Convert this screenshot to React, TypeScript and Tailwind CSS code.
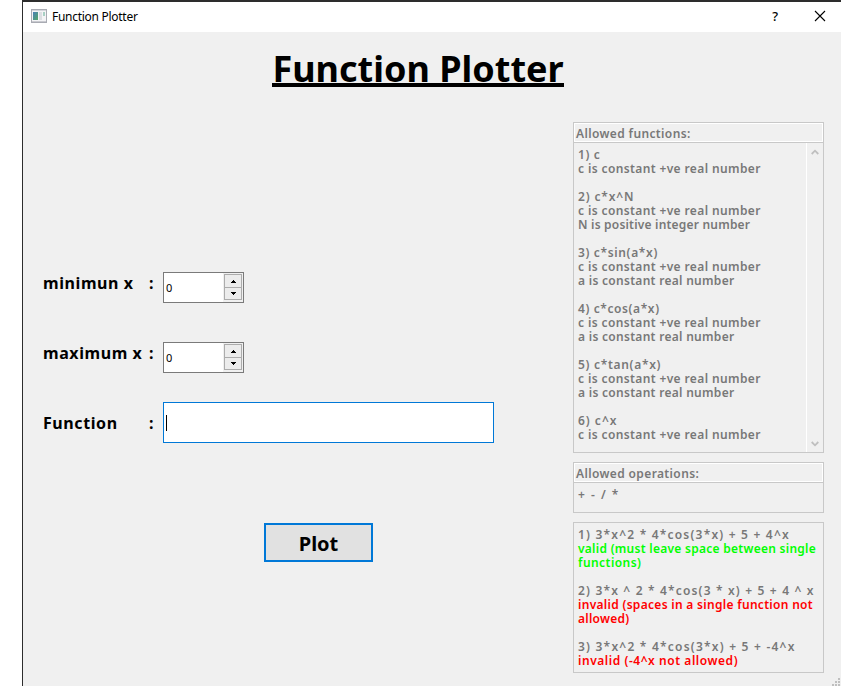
import type { ReactNode } from 'react';

type LineData = { text: string; tone?: string; track?: string };

const muted = 'text-[#787878]';
const green = 'text-[#00ff00]';
const red = 'text-[#ff0000]';

const functionLines: LineData[] = [
  { text: '1) c', track: 'tracking-[0.6px]' },
  { text: 'c is constant +ve real number' },
  { text: '' },
  { text: '2) c*x^N', track: 'tracking-[0.85px]' },
  { text: 'c is constant +ve real number' },
  { text: 'N is positive integer number', track: 'tracking-[0.2px]' },
  { text: '' },
  { text: '3) c*sin(a*x)', track: 'tracking-[0.65px]' },
  { text: 'c is constant +ve real number' },
  { text: 'a is constant real number', track: 'tracking-[0.29px]' },
  { text: '' },
  { text: '4) c*cos(a*x)', track: 'tracking-[0.6px]' },
  { text: 'c is constant +ve real number' },
  { text: 'a is constant real number', track: 'tracking-[0.29px]' },
  { text: '' },
  { text: '5) c*tan(a*x)', track: 'tracking-[0.7px]' },
  { text: 'c is constant +ve real number' },
  { text: 'a is constant real number', track: 'tracking-[0.29px]' },
  { text: '' },
  { text: '6) c^x', track: 'tracking-[1px]' },
  { text: 'c is constant +ve real number' },
];

const exampleLines: LineData[] = [
  { text: '1) 3*x^2 * 4*cos(3*x) + 5 + 4^x', track: 'tracking-[1.2px]' },
  { text: 'valid (must leave space between single', tone: green, track: 'tracking-[0.27px]' },
  { text: 'functions)', tone: green, track: 'tracking-[0.45px]' },
  { text: '' },
  { text: '2) 3*x ^ 2 * 4*cos(3 * x) + 5 + 4 ^ x', track: 'tracking-[1.17px]' },
  { text: 'invalid (spaces in a single function not', tone: red, track: 'tracking-[0.3px]' },
  { text: 'allowed)', tone: red, track: 'tracking-[0.27px]' },
  { text: '' },
  { text: '3) 3*x^2 * 4*cos(3*x) + 5 + -4^x', track: 'tracking-[1.22px]' },
  { text: 'invalid (-4^x not allowed)', tone: red, track: 'tracking-[0.55px]' },
];

function Lines({ lines }: { lines: LineData[] }) {
  return (
    <div className="pl-1 pt-[5px] text-[12px] leading-[14px] font-semibold">
      {lines.map((line, i) => (
        <div key={i} className={`h-[14px] whitespace-pre ${line.tone ?? muted} ${line.track ?? 'tracking-[0.38px]'}`}>
          {line.text}
        </div>
      ))}
    </div>
  );
}

function PanelTitle({ children }: { children: ReactNode }) {
  return (
    <div className="h-5 shrink-0 border-b border-[#c8c8c8]">
      <div className={`h-[19px] border border-white pl-px text-[12px] leading-[19px] font-semibold tracking-[0.37px] whitespace-pre ${muted}`}>
        {children}
      </div>
    </div>
  );
}

function Arrow({ up }: { up?: boolean }) {
  return (
    <svg width="6" height="3" viewBox="0.5 0 6 3" shapeRendering="crispEdges">
      <path d={up ? 'M3 0h1v1h1v1h1v1H1V2h1V1h1z' : 'M1 0h5v1H5v1H4v1H3V2H2V1H1z'} fill="#000" />
    </svg>
  );
}

function SpinBox() {
  return (
    <div className="flex h-[31px] w-[81px] justify-between border border-[#7a7a7a] bg-white">
      <span className="pl-[2px] text-[11px] leading-[30px]">0</span>
      <div className="flex w-[20px] flex-col bg-[#f0f0f0] py-px pr-px pl-px">
        <div className="flex h-[14px] items-center justify-center border border-[#acacac] bg-[#ececec]">
          <Arrow up />
        </div>
        <div className="flex h-[12px] items-center justify-center border border-t-0 border-[#acacac] bg-[#ececec]">
          <Arrow />
        </div>
      </div>
    </div>
  );
}

function FieldLabel({ children }: { children: string }) {
  return (
    <div className="flex w-[120px] shrink-0 justify-between pr-[9px] text-[16px] leading-[22px] font-bold tracking-[0.58px] whitespace-pre">
      <span>{children}</span>
      <span>:</span>
    </div>
  );
}

function ScrollChevron({ up }: { up?: boolean }) {
  return (
    <svg width="8" height="6" viewBox="0 0 8 6" fill="none" stroke="#bfbfbf" strokeWidth="1.8">
      <path d={up ? 'M.7 5 4 1.7 7.3 5' : 'M.7 1 4 4.3 7.3 1'} />
    </svg>
  );
}

export default function App() {
  return (
    <div className="h-[686px] w-[862px] overflow-hidden bg-white pl-[22px] font-['Noto_Sans',sans-serif] text-black">
      <div className="relative flex h-full w-[819px] flex-col border-t-2 border-l border-t-[#2d2d2d] border-l-[#2d2d2d] bg-[#f0f0f0]">
        <header className="flex h-[30px] shrink-0 items-center bg-white pl-2">
          <svg width="16" height="14" viewBox="0 0 16 14" className="-mt-0.5 shrink-0">
            <defs>
              <linearGradient id="pane" x1="0" y1="0" x2="1" y2="1">
                <stop offset="0" stopColor="#4a7fb8" />
                <stop offset="1" stopColor="#55a866" />
              </linearGradient>
            </defs>
            <rect x=".5" y=".5" width="15" height="13" fill="#f4f4f6" stroke="#a9abb3" />
            <path d="M1 1.5h14" stroke="#d5d6dc" />
            <rect x="2" y="3" width="5" height="8" fill="url(#pane)" />
            <rect x="8" y="3" width="3" height="8" fill="#dcdee2" />
            <rect x="12" y="3" width="2" height="4" fill="#a8d0c4" />
            <path d="M1 12.5h14" stroke="#c9cad0" />
          </svg>
          <span className="ml-[5px] text-[12px] leading-none tracking-[-0.28px]">Function Plotter</span>
          <span className="ml-auto mr-[36px] -mt-px text-[13px] leading-none font-medium">?</span>
          <svg width="12" height="12" viewBox="0 0 12 12" className="-mt-0.5 mr-[15px]" stroke="#000" strokeWidth="1.1">
            <path d="M1 1l10 10M11 1 1 11" />
          </svg>
        </header>

        <div className="flex h-[90px] shrink-0 justify-center pt-[15px] pr-7">
          <h1 className="h-10 border-b-4 border-black text-[36px] leading-[44px] font-bold whitespace-pre">Function Plotter</h1>
        </div>

        <main className="flex">
          <section className="w-[550px] pl-5 pt-[150px]">
            <div className="flex h-[70px]">
              <FieldLabel>minimun x</FieldLabel>
              <SpinBox />
            </div>
            <div className="flex h-[60px]">
              <FieldLabel>maximum x</FieldLabel>
              <SpinBox />
            </div>
            <div className="flex h-[121px]">
              <div className="pt-[10px]">
                <FieldLabel>Function</FieldLabel>
              </div>
              <div className="h-[41px] w-[331px] border border-[#0078d7] bg-white pt-3 pl-[2px]">
                <div className="h-4 w-px bg-black" />
              </div>
            </div>
            <button className="ml-[221px] flex h-[39px] w-[109px] items-center justify-center border-2 border-[#0078d7] bg-[#e1e1e1] pt-[3px] text-[20px] leading-none font-bold">
              Plot
            </button>
          </section>

          <aside className="w-[251px]">
            <div className="flex h-[331px] flex-col border border-[#c8c8c8]">
              <PanelTitle>Allowed functions:</PanelTitle>
              <div className="flex flex-1 justify-between">
                <Lines lines={functionLines} />
                <div className="flex w-[17px] flex-col items-center justify-between border-l border-white pt-[6px] pb-[5px]">
                  <ScrollChevron up />
                  <ScrollChevron />
                </div>
              </div>
            </div>
            <div className="mt-[9px] h-[51px] border border-[#c8c8c8]">
              <PanelTitle>Allowed operations:</PanelTitle>
              <Lines lines={[{ text: '+ - / *', track: 'tracking-[1.5px]' }]} />
            </div>
            <div className="mt-[9px] h-[151px] border border-[#c8c8c8]">
              <Lines lines={exampleLines} />
            </div>
          </aside>
        </main>

        <svg width="8" height="8" viewBox="0 0 8 8" className="absolute right-px bottom-0" fill="#bfbfbf" shapeRendering="crispEdges">
          <path d="M6 0h2v2H6zM3 3h2v2H3zM6 3h2v2H6zM0 6h2v2H0zM3 6h2v2H3zM6 6h2v2H6z" />
        </svg>
      </div>
    </div>
  );
}
